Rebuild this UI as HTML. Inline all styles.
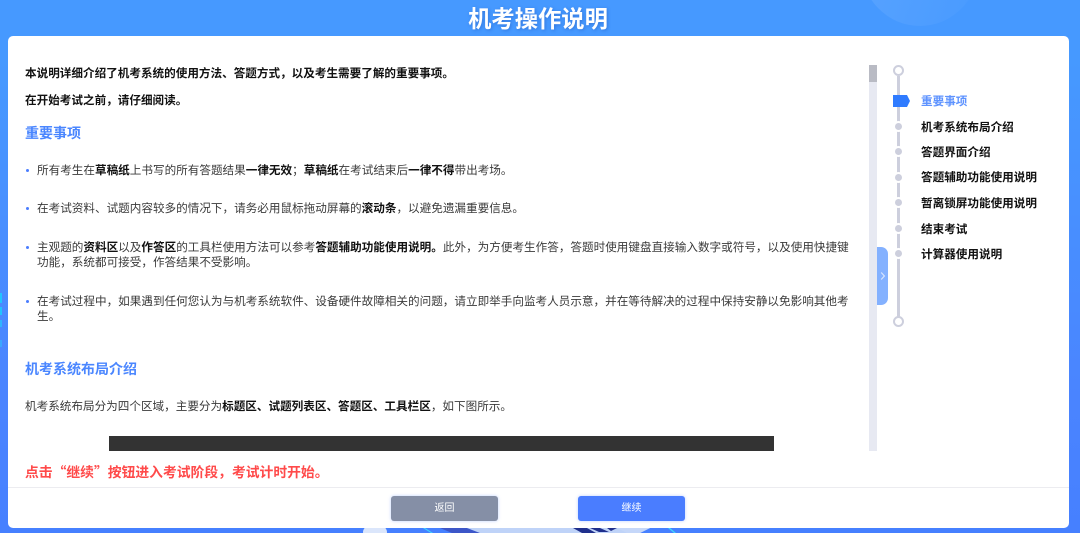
<!DOCTYPE html>
<html lang="zh"><head><meta charset="utf-8"><title>机考操作说明</title>
<style>
html,body{margin:0;padding:0}
body{width:1080px;height:533px;overflow:hidden;position:relative;background:linear-gradient(180deg,#4699ff 0,#4699ff 60px,#4a84ff 400px,#4680ff 100%);font-family:"Liberation Sans","Noto Sans CJK SC",sans-serif;color:#333}
.a{position:absolute;white-space:nowrap}
.t{font-size:11.6px;line-height:16px;color:#3a3a3a;filter:blur(.3px)}
.t b{color:#111;font-weight:700}
.i{font-size:11.6px;line-height:16px;color:#111;font-weight:700;filter:blur(.3px)}
.h{font-size:14px;line-height:20px;font-weight:700;color:#4a86ff;filter:blur(.3px)}
.n{font-size:11.6px;line-height:16px;left:921px;font-weight:700;color:#111;filter:blur(.3px)}
.d{position:absolute;left:895px;width:7px;height:7px;border-radius:50%;background:#cdcfdd}
.r{position:absolute;left:893px;width:7px;height:7px;border:2px solid #cdcfdd;border-radius:50%;background:#fff}
.b{position:absolute;top:496px;width:107px;height:25px;border-radius:3px;color:#fff;font-size:10px;line-height:25px;text-align:center;box-shadow:0 0 3px rgba(74,125,255,.35)}
.u{position:absolute;width:3px;height:3px;border-radius:50%;background:#4a7dff}
</style></head><body>
<div class="a" style="left:860px;top:-100px;width:120px;height:126px;border-radius:50%;background:linear-gradient(110deg,#5aa4ff,#4a9bff 90%)"></div>
<div class="a" style="left:0;top:2px;width:1076px;text-align:center;font-size:23.3px;line-height:34px;font-weight:700;color:#fff;text-shadow:1px 1px 3px rgba(30,80,180,.45);filter:blur(.3px)">机考操作说明</div>

<div class="a" style="left:0;top:293px;width:2px;height:10px;background:#21c3ff"></div>
<div class="a" style="left:0;top:307px;width:2px;height:8px;background:#21c3ff"></div>
<div class="a" style="left:0;top:320px;width:2px;height:7px;background:#2fb4ff"></div>
<div class="a" style="left:0;top:340px;width:2px;height:7px;background:#39a6ff"></div>

<svg class="a" style="left:300px;top:528px" width="480" height="5" viewBox="0 0 480 5">
<ellipse cx="75" cy="4" rx="12" ry="8" fill="#dbe6fb"/>
<polygon points="123,0 125,0 133,5 131,5" fill="#3fd7ff"/>
<polygon points="140,0 167,0 180,5 152,5" fill="#3c56c8"/>
<polygon points="167,0 350,0 340,5 180,5" fill="#bfd3f8"/>
<polygon points="273,0 287,0 296,5 282,5" fill="#1f2f8c"/>
<polygon points="290,0 300,0 309,4 299,4" fill="#1f2f8c"/>
<polygon points="307,0 317,0 311,3" fill="#1f2f8c"/>
<polygon points="317,0 350,0 340,5 327,5" fill="#c5d7f9"/>
<polygon points="368,0 370,0 376,5 374,5" fill="#3fd7ff"/>
</svg>

<div class="a" style="left:8px;top:36px;width:1061px;height:492px;background:#fff;border-radius:5px"></div>

<div class="a i" style="left:25px;top:66px">本说明详细介绍了机考系统的使用方法、答题方式，以及考生需要了解的重要事项。</div>
<div class="a i" style="left:25px;top:93px">在开始考试之前，请仔细阅读。</div>
<div class="a h" style="left:25px;top:123px">重要事项</div>

<div class="u" style="left:26px;top:169px"></div>
<div class="a t" style="left:37px;top:163px">所有考生在<b>草稿纸</b>上书写的所有答题结果<b>一律无效</b>；<b>草稿纸</b>在考试结束后<b>一律不得</b>带出考场。</div>
<div class="u" style="left:26px;top:207px"></div>
<div class="a t" style="left:37px;top:201px">在考试资料、试题内容较多的情况下，请务必用鼠标拖动屏幕的<b>滚动条</b>，以避免遗漏重要信息。</div>
<div class="u" style="left:26px;top:246px"></div>
<div class="a t" style="left:37px;top:240px">主观题的<b>资料区</b>以及<b>作答区</b>的工具栏使用方法可以参考<b>答题辅助功能使用说明。</b>此外，为方便考生作答，答题时使用键盘直接输入数字或符号，以及使用快捷键</div>
<div class="a t" style="left:37px;top:255px">功能，系统都可接受，作答结果不受影响。</div>
<div class="u" style="left:26px;top:300px"></div>
<div class="a t" style="left:37px;top:294px">在考试过程中，如果遇到任何您认为与机考系统软件、设备硬件故障相关的问题，请立即举手向监考人员示意，并在等待解决的过程中保持安静以免影响其他考</div>
<div class="a t" style="left:37px;top:309px">生。</div>

<div class="a h" style="left:25px;top:359px">机考系统布局介绍</div>
<div class="a t" style="left:25px;top:399px">机考系统布局分为四个区域，主要分为<b>标题区、试题列表区、答题区、工具栏区</b>，如下图所示。</div>
<div class="a" style="left:108.5px;top:436px;width:665.5px;height:15px;background:#333"></div>
<div class="a" style="left:25px;top:461px;font-family:'Noto Sans CJK SC',sans-serif;font-size:13.8px;line-height:20px;font-weight:700;color:#ff4a4a;filter:blur(.3px)">点击“继续”按钮进入考试阶段，考试计时开始。</div>

<div class="a" style="left:869px;top:65px;width:8px;height:386px;background:#e7e9f2"></div>
<div class="a" style="left:869px;top:65px;width:8px;height:17px;background:#b9bbc4"></div>
<div class="a" style="left:877px;top:247px;width:11px;height:58px;background:#84b1ff;border-radius:0 7px 7px 0"></div>
<svg class="a" style="left:880px;top:271px" width="6" height="10" viewBox="0 0 6 10"><path d="M1.2 1.5 L4.4 5 L1.2 8.5" fill="none" stroke="#dbe7ff" stroke-width="1.1"/></svg>

<div class="a" style="left:897px;top:76px;width:3px;height:242px;background:#cdcfdd"></div>
<div class="r" style="top:65px"></div>
<div class="r" style="top:316px"></div>
<svg class="a" style="left:893px;top:95px" width="18" height="12" viewBox="0 0 18 12"><path d="M0 0 H14 L17 6 L14 12 H0 Z" fill="#2f7bff"/></svg>
<div class="d" style="top:123px;box-shadow:0 0 0 2px #fff"></div>
<div class="d" style="top:148px;box-shadow:0 0 0 2px #fff"></div>
<div class="d" style="top:174px;box-shadow:0 0 0 2px #fff"></div>
<div class="d" style="top:199px;box-shadow:0 0 0 2px #fff"></div>
<div class="d" style="top:225px;box-shadow:0 0 0 2px #fff"></div>
<div class="d" style="top:250px;box-shadow:0 0 0 2px #fff"></div>

<div class="a n" style="top:94px;color:#5e93ff">重要事项</div>
<div class="a n" style="top:120px">机考系统布局介绍</div>
<div class="a n" style="top:145px">答题界面介绍</div>
<div class="a n" style="top:170px">答题辅助功能使用说明</div>
<div class="a n" style="top:196px">暂离锁屏功能使用说明</div>
<div class="a n" style="top:222px">结束考试</div>
<div class="a n" style="top:247px">计算器使用说明</div>

<div class="a" style="left:8px;top:487px;width:1061px;height:1px;background:#ececf0"></div>
<div class="b" style="left:391px;background:#858fa6">返回</div>
<div class="b" style="left:578px;background:#4a7dff">继续</div>
</body></html>
